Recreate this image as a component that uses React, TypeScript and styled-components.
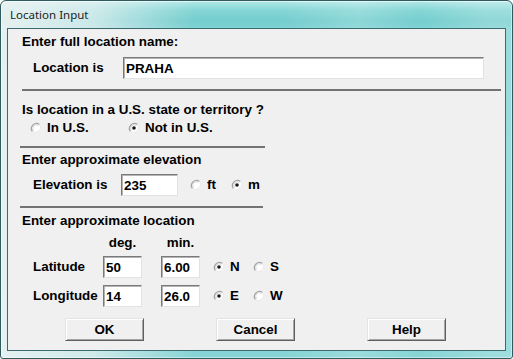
import React from "react";
import styled, { createGlobalStyle } from "styled-components";

const GlobalStyle = createGlobalStyle`
  html, body {
    margin: 0;
    padding: 0;
    background: #ffffff;
  }
  * {
    box-sizing: border-box;
  }
`;

const uiFont = `"Liberation Sans", Arial, sans-serif`;

const Window = styled.div`
  width: 513px;
  height: 359px;
  display: flex;
  flex-direction: column;
  padding: 0 6px 7px 6px;
  border: 1px solid #2f5a5e;
  border-radius: 6px 6px 3px 3px;
  background:
    linear-gradient(90deg, rgba(238, 243, 243, 0.92) 0%, rgba(238, 243, 243, 0.7) 18%, rgba(238, 243, 243, 0) 38%),
    linear-gradient(90deg, rgba(255, 255, 255, 0) 55%, rgba(255, 255, 255, 0.18) 70%, rgba(255, 255, 255, 0) 82%, rgba(255, 255, 255, 0.2) 95%),
    linear-gradient(180deg, #b2e8e8 0%, #86d6d6 9px, #74cdce 20px, #7fd3d4 28px, #86d4d5 100%);
  box-shadow: inset 1px 1px 0 rgba(255, 255, 255, 0.6), inset -1px -1px 0 rgba(255, 255, 255, 0.45);
`;

const TitleBar = styled.div`
  height: 27px;
  display: flex;
  align-items: center;
  padding-left: 3px;
  font-family: "Noto Sans", "Open Sans", sans-serif;
  font-size: 11.5px;
  color: #1c1c1c;
`;

const Client = styled.div`
  flex: 1;
  display: flex;
  flex-direction: column;
  background: #f0f0f0;
  border: 1px solid #3d6a6e;
  padding-top: 5px;
  font-family: ${uiFont};
  font-size: 13.4px;
  font-weight: bold;
  color: #000;
`;

const Heading = styled.div<{ $mt: number }>`
  margin-top: ${(p) => p.$mt}px;
  padding-left: 14px;
  line-height: 16px;
  height: 16px;
  white-space: nowrap;
`;

const Separator = styled.div<{ $mt: number; $left: number; $width: number }>`
  margin-top: ${(p) => p.$mt}px;
  margin-left: ${(p) => p.$left}px;
  width: ${(p) => p.$width}px;
  height: 2px;
  background: #737373;
`;

const FieldRow = styled.div<{ $mt: number }>`
  margin-top: ${(p) => p.$mt}px;
  padding-left: 25px;
  display: flex;
  align-items: center;
  height: 22px;
`;

const Label = styled.span<{ $w: number }>`
  width: ${(p) => p.$w}px;
  line-height: 16px;
  white-space: nowrap;
`;

const TextBox = styled.input<{ $w: number }>`
  width: ${(p) => p.$w}px;
  height: 22px;
  margin: 0;
  padding: 0 0 0 2px;
  background: #ffffff;
  border-style: solid;
  border-width: 1px;
  border-color: #7a7a7a #e2e2e2 #e2e2e2 #7a7a7a;
  box-shadow: inset 1px 1px 0 #b4b4b4;
  font-family: ${uiFont};
  font-size: 13.4px;
  font-weight: bold;
  color: #000;
  outline: none;
`;

const OptionRow = styled.div<{ $mt: number }>`
  margin-top: ${(p) => p.$mt}px;
  padding-left: 22px;
  display: flex;
  align-items: center;
  height: 16px;
`;

const Option = styled.label<{ $w?: number; $ml?: number }>`
  display: flex;
  align-items: center;
  gap: 5px;
  width: ${(p) => (p.$w ? `${p.$w}px` : "auto")};
  margin-left: ${(p) => p.$ml ?? 0}px;
  line-height: 16px;
  white-space: nowrap;
`;

const RadioMark = ({ checked }: { checked?: boolean }) => (
  <svg width="12" height="12" viewBox="0 0 12 12">
    <circle cx="6" cy="6" r="5" fill="#ffffff" />
    <path d="M2.5 9.5 A5 5 0 0 1 9.5 2.5" fill="none" stroke="#a4a4a4" strokeWidth="1.3" />
    <path d="M3.6 8.4 A3.4 3.4 0 0 1 8.4 3.6" fill="none" stroke="#d6d6d6" strokeWidth="1" />
    <path d="M9.5 2.5 A5 5 0 0 1 2.5 9.5" fill="none" stroke="#ececec" strokeWidth="1.2" />
    {checked && <circle cx="6" cy="6" r="1.8" fill="#1a1a1a" />}
  </svg>
);

const Radio = ({
  label,
  checked,
  w,
  ml,
}: {
  label: string;
  checked?: boolean;
  w?: number;
  ml?: number;
}) => (
  <Option $w={w} $ml={ml}>
    <RadioMark checked={checked} />
    {label}
  </Option>
);

const CoordGrid = styled.div<{ $mt: number; $h?: number }>`
  margin-top: ${(p) => p.$mt}px;
  padding-left: 25px;
  display: grid;
  grid-template-columns: 70px 58px 52px 40px auto;
  align-items: center;
  height: ${(p) => p.$h ?? 22}px;
`;

const ColHead = styled.span`
  width: 39px;
  text-align: center;
  line-height: 16px;
`;

const ButtonRow = styled.div`
  margin-top: 11px;
  padding-left: 57px;
  display: flex;
  gap: 72px;
`;

const Button = styled.button`
  width: 79px;
  height: 23px;
  margin: 0;
  padding: 0;
  background: #f0f0f0;
  border-style: solid;
  border-width: 1px;
  border-color: #e4e4e4 #5f5f5f #5f5f5f #e4e4e4;
  box-shadow: inset 1px 1px 0 #ffffff, inset -1px -1px 0 #a6a6a6;
  font-family: ${uiFont};
  font-size: 13.4px;
  font-weight: bold;
  color: #000;
`;

export default function App() {
  return (
    <>
      <GlobalStyle />
      <Window>
        <TitleBar>Location Input</TitleBar>
        <Client>
          <Heading $mt={0}>Enter full location name:</Heading>
          <FieldRow $mt={7}>
            <Label $w={90}>Location is</Label>
            <TextBox $w={361} defaultValue="PRAHA" readOnly />
          </FieldRow>
          <Separator $mt={10} $left={14} $width={479} />

          <Heading $mt={11}>Is location in a U.S. state or territory ?</Heading>
          <OptionRow $mt={2}>
            <Radio label="In U.S." w={98} />
            <Radio label="Not in U.S." checked />
          </OptionRow>
          <Separator $mt={10} $left={12} $width={245} />

          <Heading $mt={4}>Enter approximate elevation</Heading>
          <FieldRow $mt={6}>
            <Label $w={88}>Elevation is</Label>
            <TextBox $w={57} defaultValue="235" readOnly />
            <Radio label="ft" w={41} ml={12} />
            <Radio label="m" checked />
          </FieldRow>
          <Separator $mt={10} $left={12} $width={243} />

          <Heading $mt={5}>Enter approximate location</Heading>
          <CoordGrid $mt={6} $h={16}>
            <span />
            <ColHead>deg.</ColHead>
            <ColHead>min.</ColHead>
          </CoordGrid>
          <CoordGrid $mt={5}>
            <Label $w={70}>Latitude</Label>
            <TextBox $w={39} defaultValue="50" readOnly />
            <TextBox $w={39} defaultValue="6.00" readOnly />
            <Radio label="N" checked />
            <Radio label="S" />
          </CoordGrid>
          <CoordGrid $mt={7}>
            <Label $w={70}>Longitude</Label>
            <TextBox $w={39} defaultValue="14" readOnly />
            <TextBox $w={39} defaultValue="26.0" readOnly />
            <Radio label="E" checked />
            <Radio label="W" />
          </CoordGrid>

          <ButtonRow>
            <Button>OK</Button>
            <Button>Cancel</Button>
            <Button>Help</Button>
          </ButtonRow>
        </Client>
      </Window>
    </>
  );
}
